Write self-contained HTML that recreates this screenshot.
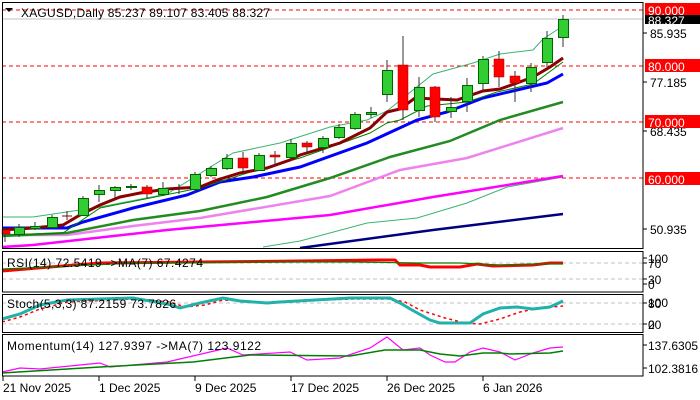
<!DOCTYPE html>
<html><head><meta charset="utf-8"><style>
html,body{margin:0;padding:0;background:#fff;}
svg{display:block;font-family:"Liberation Sans",sans-serif;}
</style></head><body>
<svg width="700" height="400" viewBox="0 0 700 400" xmlns="http://www.w3.org/2000/svg">
<rect width="700" height="400" fill="#fff"/>
<g fill="none">
<line x1="2" y1="10" x2="643" y2="10" stroke="#f00" stroke-dasharray="4,3"/>
<line x1="2" y1="66" x2="643" y2="66" stroke="#f00" stroke-dasharray="4,3"/>
<line x1="2" y1="122" x2="643" y2="122" stroke="#f00" stroke-dasharray="4,3"/>
<line x1="2" y1="178" x2="643" y2="178" stroke="#f00" stroke-dasharray="4,3"/>
<line x1="2" y1="19" x2="643" y2="19" stroke="#c0c0c0"/>
<polyline stroke="#000080" stroke-width="2.5" points="300,248 433,230 563,214"/>
<polyline stroke="#3cb371" stroke-width="1" points="263,247 300,241 367,223 417,218 467,203 507,187 563,177"/>
<polyline stroke="#ff00ff" stroke-width="2.5" points="2,247 33,245 167,230 330,215 433,197 563,176"/>
<polyline stroke="#ee82ee" stroke-width="2.5" points="2,235 67,235 133,226 200,218 330,196 400,170 467,158 563,128"/>
<polyline stroke="#228b22" stroke-width="2.5" points="2,236 67,233 133,220 200,211 267,197 330,178 390,157 450,141 500,120 563,102"/>
<polyline stroke="#3cb371" stroke-width="1" points="2,217 33,217 100,207 167,194 233,153 280,143 330,127 367,120 387,111 433,74 473,63 500,54 533,50 543,39 563,26"/>
<polyline stroke="#0000ff" stroke-width="3" points="2,228 67,228 83,222 133,208 187,195 220,182 253,177 300,167 367,143 417,120 447,112 483,98 517,90 547,83 563,74"/>
<polyline stroke="#008000" stroke-width="1" points="2,235 63,233 100,208 140,200 200,188 257,170 300,158 370,133 387,123 400,120 427,106 467,102 497,92 533,84 563,62"/>
<polyline stroke="#8b0000" stroke-width="3" points="2,230 33,228 63,225 80,215 100,205 120,197 140,193 167,189 200,187 217,180 240,173 267,168 290,160 300,155 340,143 370,128 387,112 400,109 415,98 457,100 483,91 500,89 517,83 533,77 550,67 563,58"/>
</g>
<g stroke="#333" stroke-width="1">
<path d="M5,228V242M19,224V237M35,222V230M52,215V229M67,211V220M83,196V216M99,185V202M115,186V198M131,184V190M147,185V198M163,182V196M179,184V194M195,172V193M211,166V177M227,154V170M243,152V172M259,153V171M275,151V166M291,139V160M307,141V153M323,136V153M339,124V139M355,112V130M371,107V118M387,60V102M403,36V120M419,77V117M435,86V122M451,97V118M467,78V112M483,56V90M499,51V87M515,71V102M531,63V92M547,31V67M563,15V47"/>
</g>
<g stroke="#006400" stroke-width="1" fill="#32cd32">
<rect x="14.5" y="227.5" width="10" height="7"/>
<rect x="30.5" y="226.5" width="10" height="2"/>
<rect x="47.5" y="217.5" width="10" height="10"/>
<rect x="78.5" y="198.5" width="10" height="17"/>
<rect x="94.5" y="190.5" width="10" height="4"/>
<rect x="110.5" y="187.5" width="10" height="3"/>
<rect x="126.5" y="186.5" width="10" height="1"/>
<rect x="158.5" y="188.5" width="10" height="6"/>
<rect x="190.5" y="174.5" width="10" height="15"/>
<rect x="206.5" y="168.5" width="10" height="7"/>
<rect x="222.5" y="158.5" width="10" height="10"/>
<rect x="254.5" y="155.5" width="10" height="15"/>
<rect x="286.5" y="143.5" width="10" height="14"/>
<rect x="318.5" y="138.5" width="10" height="9"/>
<rect x="334.5" y="127.5" width="10" height="10"/>
<rect x="350.5" y="114.5" width="10" height="14"/>
<rect x="366.5" y="112.5" width="10" height="2"/>
<rect x="382.5" y="70.5" width="10" height="24"/>
<rect x="414.5" y="87.5" width="10" height="23"/>
<rect x="446.5" y="107.5" width="10" height="4"/>
<rect x="462.5" y="85.5" width="10" height="16"/>
<rect x="478.5" y="59.5" width="10" height="24"/>
<rect x="526.5" y="67.5" width="10" height="16"/>
<rect x="542.5" y="38.5" width="10" height="24"/>
<rect x="558.5" y="19.5" width="10" height="18"/>
</g>
<g fill="#ff0000" stroke="#a00" stroke-width="0.5">
<rect x="2" y="230" width="8" height="4"/>
<rect x="142" y="187" width="10" height="7"/>
<rect x="238" y="158" width="10" height="10"/>
<rect x="270" y="155" width="10" height="2"/>
<rect x="302" y="143" width="10" height="4"/>
<rect x="398" y="65" width="10" height="45"/>
<rect x="430" y="87" width="10" height="30"/>
<rect x="494" y="59" width="10" height="18"/>
<rect x="510" y="76" width="10" height="7"/>
</g>
<g stroke="#8b0000"><path d="M62,216H72M174,189H184"/></g>
<polygon points="5,8 13,8 9,12" fill="#000"/>
<text x="21" y="17" font-size="12" fill="#000" textLength="249">XAGUSD,Daily  85.237 89.107 83.405 88.327</text>
<g fill="none">
<line x1="2" y1="263" x2="643" y2="263" stroke="#c0c0c0" stroke-dasharray="4,3"/>
<line x1="2" y1="279" x2="643" y2="279" stroke="#c0c0c0" stroke-dasharray="4,3"/>
<polyline stroke="#ff0000" stroke-width="3" points="2,271 50,267 100,263 200,262 300,261 380,260 395,260 400,265 420,265 430,267 460,267 477,264 493,266 533,265 550,263 563,263"/>
<polyline stroke="#008000" stroke-width="1.2" points="2,269 50,267 133,263 250,262 350,262 420,263 460,263 500,265 533,264 563,264"/>
</g>
<text x="7" y="267" font-size="12" fill="#000" textLength="196">RSI(14) 72.5419  -&gt;MA(7) 67.4274</text>
<g fill="none">
<line x1="2" y1="303" x2="643" y2="303" stroke="#c0c0c0" stroke-dasharray="4,3"/>
<line x1="2" y1="324" x2="643" y2="324" stroke="#c0c0c0" stroke-dasharray="4,3"/>
<polyline stroke="#ff0000" stroke-width="1.5" stroke-dasharray="3,3" points="2,322 20,317 40,309 67,302 133,299 170,302 185,307 205,305 223,300 245,301 270,303 300,301 350,299 390,299 405,302 420,310 445,318 465,323 480,324 500,319 520,312 540,308 563,306"/>
<polyline stroke="#20b2aa" stroke-width="3" points="2,319 20,314 40,305 67,300 133,298 167,304 180,308 200,303 223,298 240,301 267,303 280,302 350,298 390,298 400,303 412,310 430,320 440,323 470,323 483,314 500,308 517,307 533,309 550,307 563,301"/>
</g>
<text x="7" y="308" font-size="12" fill="#000" textLength="169">Stoch(5,3,3) 87.2159 73.7826</text>
<g fill="none">
<polyline stroke="#ff00ff" stroke-width="1.2" points="2,372 20,368 40,369 100,363 110,367 167,362 227,348 243,355 290,352 307,360 340,358 370,348 387,337 403,350 420,348 430,355 445,362 455,362 470,352 483,348 500,352 515,360 533,353 550,348 563,347"/>
<polyline stroke="#008000" stroke-width="1.5" points="2,373 100,367 193,362 250,355 350,356 385,350 420,350 440,354 460,356 483,353 500,353 510,354 550,353 563,351"/>
</g>
<text x="7" y="350" font-size="12" fill="#000" textLength="254">Momentum(14) 127.9397  -&gt;MA(7) 123.9122</text>
<g fill="none" stroke="#000" stroke-width="1">
<rect x="2.5" y="2.5" width="640.5" height="246"/>
<rect x="2.5" y="251.5" width="640.5" height="40.5"/>
<rect x="2.5" y="294.5" width="640.5" height="38"/>
<rect x="2.5" y="334.5" width="640.5" height="41.5"/>
<path d="M643,33H647M643,82H647M643,131H647M643,229H647M643,258H647M643,263H647M643,279H647M643,284H647M643,303H647M643,324H647M643,345H647M643,368H647"/>
<path d="M3,376V381M99,376V381M195,376V381M291,376V381M387,376V381M483,376V381"/>
</g>
<g font-size="12">
<rect x="645" y="3" width="55" height="13" fill="#ff0000"/>
<rect x="645" y="15" width="55" height="9" fill="#000"/>
<text x="648" y="25" fill="#fff">88.327</text>
<text x="648" y="15" fill="#fff">90.000</text>
<text x="650" y="38" fill="#000">85.935</text>
<rect x="645" y="59" width="55" height="13" fill="#ff0000"/>
<text x="648" y="71" fill="#fff">80.000</text>
<text x="650" y="87" fill="#000">77.185</text>
<text x="650" y="136" fill="#000">68.435</text>
<rect x="645" y="115" width="55" height="13" fill="#ff0000"/>
<text x="648" y="127" fill="#fff">70.000</text>
<rect x="645" y="172" width="55" height="13" fill="#ff0000"/>
<text x="648" y="184" fill="#fff">60.000</text>
<text x="650" y="234" fill="#000">50.935</text>
<text x="648" y="263" fill="#000">100</text>
<text x="648" y="268" fill="#000">70</text>
<text x="648" y="284" fill="#000">30</text>
<text x="648" y="289" fill="#000">0</text>
<text x="648" y="307" fill="#000">100</text>
<text x="648" y="308" fill="#000">80</text>
<text x="648" y="329" fill="#000">20</text>
<text x="648" y="329" fill="#000">0</text>
<text x="648" y="350" fill="#000">137.6305</text>
<text x="648" y="373" fill="#000">102.3816</text>
</g>
<g font-size="12" fill="#000">
<text x="3" y="392">21 Nov 2025</text>
<text x="99" y="392">1 Dec 2025</text>
<text x="195" y="392">9 Dec 2025</text>
<text x="291" y="392">17 Dec 2025</text>
<text x="387" y="392">26 Dec 2025</text>
<text x="483" y="392">6 Jan 2026</text>
</g>
</svg>
</body></html>
